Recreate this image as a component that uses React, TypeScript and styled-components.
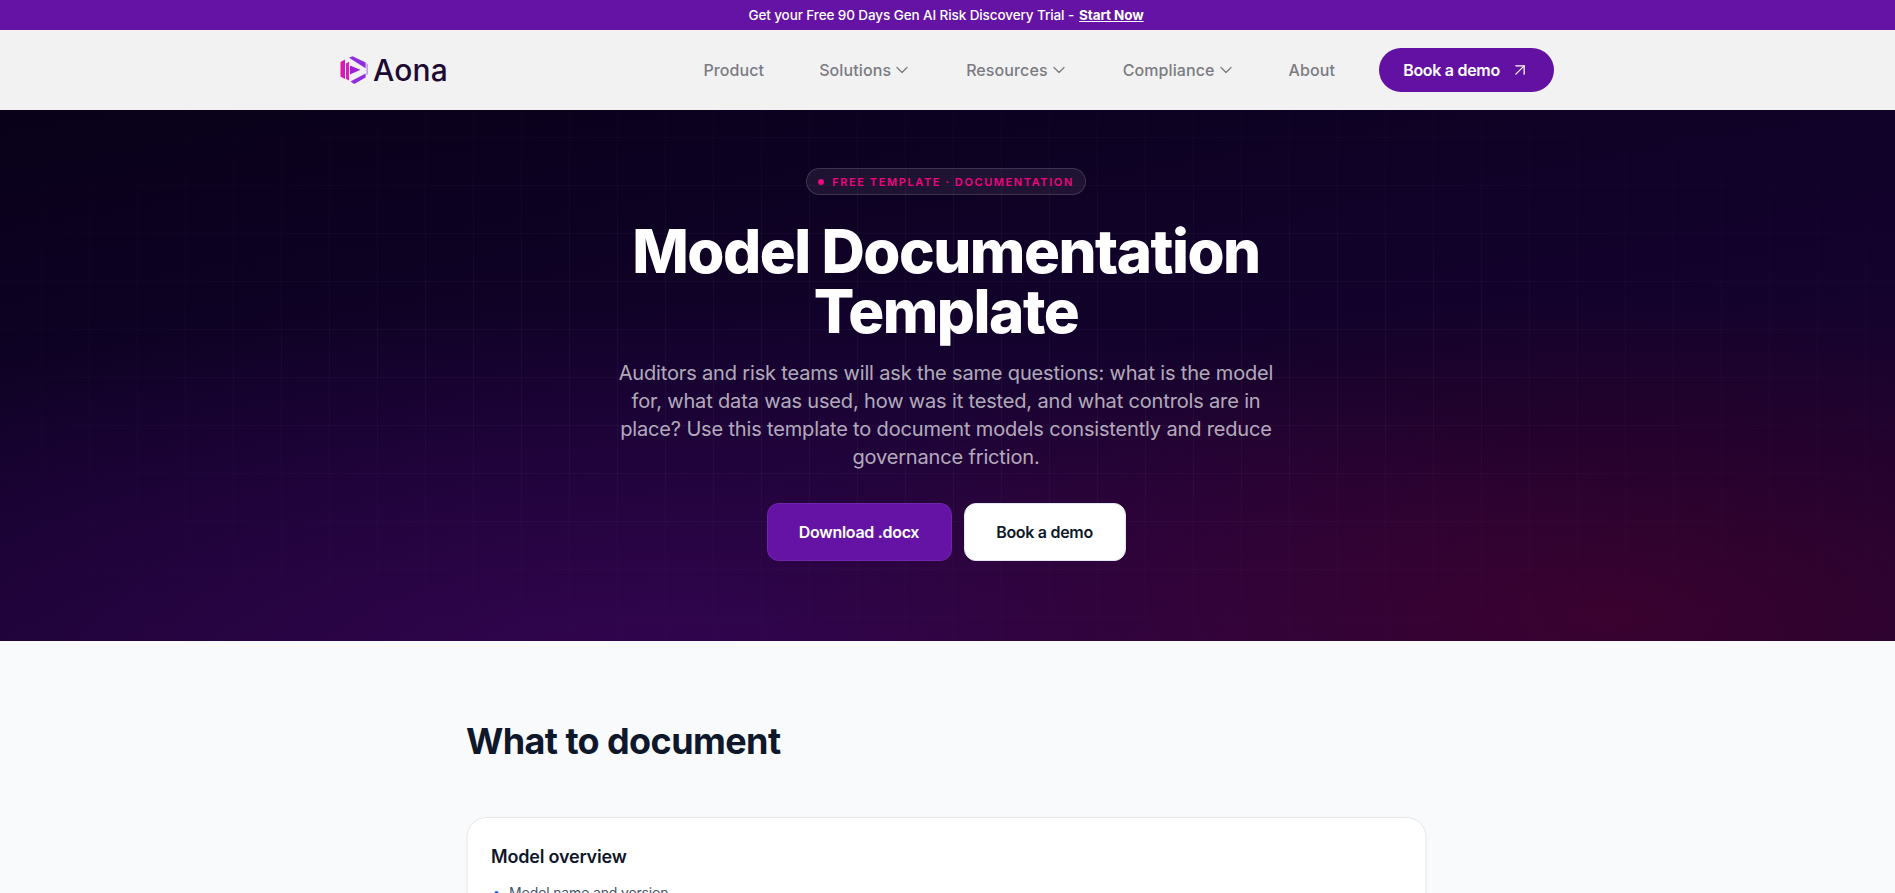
import React from "react";
import styled, { createGlobalStyle } from "styled-components";
import { ArrowUpRight, ChevronDown } from "lucide-react";

const GlobalStyle = createGlobalStyle`
  html, body {
    margin: 0;
    height: 100%;
    overflow: hidden;
    background: #f8fafc;
    font-family: Inter, "Noto Sans", sans-serif;
  }
  * { box-sizing: border-box; }
`;

const Banner = styled.div`
  height: 30px;
  padding-right: 3px;
  display: flex;
  justify-content: center;
  align-items: center;
  gap: 5px;
  background: #6413a5;
  color: #fff;
  font-size: 13.5px;
  font-weight: 500;
  letter-spacing: -0.1px;
`;

const BannerLink = styled.a`
  font-weight: 700;
  color: #fff;
  text-decoration: underline;
`;

const NavBar = styled.header`
  height: 80px;
  padding-right: 1px;
  background: #f2f2f2;
  display: flex;
  justify-content: center;
  align-items: center;
`;

const NavInner = styled.div`
  width: 1214px;
  display: flex;
  align-items: center;
  justify-content: space-between;
`;

const Logo = styled.a`
  display: flex;
  align-items: center;
  gap: 5px;
  color: #1d0a33;
  font-size: 30px;
  font-weight: 500;
  letter-spacing: 0.2px;
`;

const NavRight = styled.nav`
  display: flex;
  align-items: center;
`;

const NavItem = styled.a<{ $gap: number }>`
  display: flex;
  align-items: center;
  gap: 1px;
  margin-right: ${(p) => p.$gap}px;
  color: #7b7b83;
  font-size: 16px;
  font-weight: 500;
  letter-spacing: 0.1px;
`;

const DemoPill = styled.a`
  width: 175px;
  height: 44px;
  display: flex;
  justify-content: center;
  align-items: center;
  gap: 10px;
  border-radius: 22px;
  background: #6311a3;
  color: #fff;
  font-size: 16px;
  font-weight: 600;
  letter-spacing: -0.3px;
`;

const Hero = styled.section`
  position: relative;
  height: 531px;
  padding: 58px 3px 0 0;
  display: flex;
  flex-direction: column;
  align-items: center;
  overflow: hidden;
  background:
    radial-gradient(ellipse 45% 60% at 85% 95%, rgba(80, 0, 40, 0.55), transparent 100%),
    radial-gradient(ellipse 60% 70% at 35% 105%, rgba(60, 5, 90, 0.75), transparent 100%),
    linear-gradient(170deg, #090119 0%, #11022a 45%, #1c0434 100%);

  &::before {
    content: "";
    position: absolute;
    inset: 0;
    background-image:
      linear-gradient(rgba(255, 255, 255, 0.03) 1px, transparent 1px),
      linear-gradient(90deg, rgba(255, 255, 255, 0.03) 1px, transparent 1px);
    background-size: 48px 48px;
    background-position: 41px 27px;
    mask-image: radial-gradient(ellipse 70% 70% at 50% 45%, #000 40%, transparent 100%);
  }
`;

const HeroContent = styled.div`
  position: relative;
  display: flex;
  flex-direction: column;
  align-items: center;
`;

const Badge = styled.div`
  height: 27px;
  width: 280px;
  display: flex;
  justify-content: center;
  align-items: center;
  gap: 8px;
  border: 1px solid rgba(255, 255, 255, 0.14);
  border-radius: 14px;
  background: rgba(255, 255, 255, 0.07);
  color: #f0047f;
  font-size: 11px;
  font-weight: 600;
  letter-spacing: 1.6px;
`;

const BadgeDot = styled.span`
  width: 6px;
  height: 6px;
  border-radius: 50%;
  background: #f0047f;
`;

const Title = styled.h1`
  margin: 26px 0 0;
  width: 760px;
  text-align: center;
  color: #fff;
  font-size: 60px;
  line-height: 60px;
  font-weight: 800;
  letter-spacing: -1.5px;
`;

const Lead = styled.p`
  margin: 18px 0 0;
  width: 672px;
  text-align: center;
  color: rgba(255, 255, 255, 0.68);
  font-size: 20px;
  line-height: 28px;
  letter-spacing: -0.16px;
`;

const HeroButtons = styled.div`
  margin-top: 32px;
  display: flex;
  gap: 12px;
`;

const HeroButton = styled.a<{ $light?: boolean }>`
  height: 58px;
  width: ${(p) => (p.$light ? 162 : 185)}px;
  display: flex;
  justify-content: center;
  align-items: center;
  border-radius: 12px;
  border: 1px solid ${(p) => (p.$light ? "#e2e8f0" : "rgba(255,255,255,0.08)")};
  background: ${(p) => (p.$light ? "#fff" : "#6413a5")};
  color: ${(p) => (p.$light ? "#0f172a" : "#fff")};
  font-size: 16px;
  font-weight: 600;
  letter-spacing: -0.3px;
`;

const Content = styled.main`
  width: 960px;
  margin: 0 auto;
  padding-top: 76px;
  transform: translateX(-1.5px);
`;

const SectionTitle = styled.h2`
  margin: 0;
  color: #0f172a;
  font-size: 36px;
  line-height: 48px;
  font-weight: 700;
  letter-spacing: -0.6px;
`;

const Card = styled.article`
  margin-top: 52px;
  padding: 25px 24px;
  border: 1px solid #e5e7eb;
  border-radius: 20px;
  background: #fff;
`;

const CardTitle = styled.h3`
  margin: 0;
  color: #0f172a;
  font-size: 18px;
  line-height: 28px;
  font-weight: 600;
  letter-spacing: -0.2px;
`;

const List = styled.ul`
  margin: 11px 0 0;
  padding: 0 0 0 3px;
  list-style: none;
`;

const ListItem = styled.li`
  display: flex;
  align-items: center;
  gap: 11px;
  color: #475569;
  font-size: 14px;
  line-height: 22px;
  letter-spacing: -0.15px;
  margin-bottom: 8px;

  &::before {
    content: "";
    width: 4px;
    height: 4px;
    border-radius: 50%;
    background: #2563eb;
  }
`;

const LogoMark = () => (
  <svg width="28" height="28" viewBox="0 0 28 28">
    <defs>
      <linearGradient id="aonaPink" x1="0" y1="0" x2="1" y2="0">
        <stop offset="0" stopColor="#f00f9a" />
        <stop offset="1" stopColor="#c81fd0" />
      </linearGradient>
    </defs>
    <path d="M.5 6 5 3.4V23L.5 20.4z" fill="url(#aonaPink)" />
    <path d="M6 7.5 9 5.8v18.7L6 23z" fill="#d61fc0" />
    <path d="M9 1.8 12.6.2 25.6 6.6v5.6z" fill="#8e2de2" />
    <path d="M26.4 7.2 28 8.2v10.2L26.4 19.2z" fill="#c79bff" />
    <path d="M10 9.4 20.4 13.8 10 18.4z" fill="#a11fd6" />
    <path d="M10.4 25.6 25.6 17.4v4.2L14.2 28z" fill="#8e2de2" />
  </svg>
);

const navLinks = [
  { label: "Product", gap: 55 },
  { label: "Solutions", gap: 54, menu: true },
  { label: "Resources", gap: 54, menu: true },
  { label: "Compliance", gap: 53, menu: true },
  { label: "About", gap: 44 },
];

export default function App() {
  return (
    <>
      <GlobalStyle />
      <Banner>
        <span>Get your Free 90 Days Gen AI Risk Discovery Trial -</span>
        <BannerLink>Start Now</BannerLink>
      </Banner>
      <NavBar>
        <NavInner>
          <Logo>
            <LogoMark />
            Aona
          </Logo>
          <NavRight>
            {navLinks.map((l) => (
              <NavItem key={l.label} $gap={l.gap}>
                {l.label}
                {l.menu && <ChevronDown size={20} strokeWidth={1.5} />}
              </NavItem>
            ))}
            <DemoPill>
              Book a demo
              <ArrowUpRight size={20} strokeWidth={1.5} />
            </DemoPill>
          </NavRight>
        </NavInner>
      </NavBar>
      <Hero>
        <HeroContent>
          <Badge>
            <BadgeDot />
            FREE TEMPLATE · DOCUMENTATION
          </Badge>
          <Title>Model Documentation Template</Title>
          <Lead>
            Auditors and risk teams will ask the same questions: what is the model for, what data was used, how
            was it tested, and what controls are in place? Use this template to document models consistently and
            reduce governance friction.
          </Lead>
          <HeroButtons>
            <HeroButton>Download .docx</HeroButton>
            <HeroButton $light>Book a demo</HeroButton>
          </HeroButtons>
        </HeroContent>
      </Hero>
      <Content>
        <SectionTitle>What to document</SectionTitle>
        <Card>
          <CardTitle>Model overview</CardTitle>
          <List>
            <ListItem>Model name and version</ListItem>
            <ListItem>Owner and business purpose</ListItem>
          </List>
        </Card>
      </Content>
    </>
  );
}
